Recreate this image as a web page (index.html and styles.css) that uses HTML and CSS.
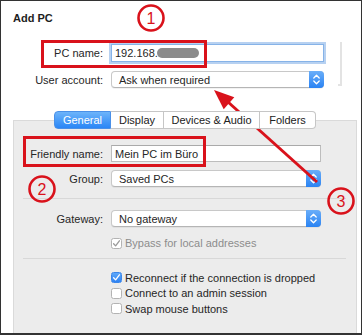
FILE: index.html
```html
<!DOCTYPE html>
<html>
<head>
<meta charset="utf-8">
<link rel="stylesheet" href="styles.css">
</head>
<body>
<div class="frame">
  <div class="title">Add PC</div>
  <div class="top">
    <div class="row">
      <span class="lbl">PC name:</span>
      <div class="input focus wide"><span>192.168.</span><span class="blur"></span></div>
    </div>
    <div class="row">
      <span class="lbl">User account:</span>
      <div class="select wide"><span>Ask when required</span>
        <svg class="stepper" viewBox="0 0 15 17" width="15" height="17"><polyline points="4.8,7 7.5,4.3 10.2,7"/><polyline points="4.8,10 7.5,12.7 10.2,10"/></svg>
      </div>
    </div>
  </div>
  <div class="tabs">
    <div class="tab t-general active">General</div>
    <div class="tab t-display">Display</div>
    <div class="tab t-devices">Devices &amp; Audio</div>
    <div class="tab t-folders">Folders</div>
  </div>
  <div class="panel">
    <div class="row">
      <span class="lbl">Friendly name:</span>
      <div class="input narrow"><span>Mein PC im Büro</span></div>
    </div>
    <div class="row gap8">
      <span class="lbl">Group:</span>
      <div class="select narrow"><span>Saved PCs</span>
        <svg class="stepper" viewBox="0 0 15 17" width="15" height="17"><polyline points="4.8,7 7.5,4.3 10.2,7"/><polyline points="4.8,10 7.5,12.7 10.2,10"/></svg>
      </div>
    </div>
    <div class="sep sep1"></div>
    <div class="row gap11">
      <span class="lbl">Gateway:</span>
      <div class="select narrow"><span>No gateway</span>
        <svg class="stepper" viewBox="0 0 15 17" width="15" height="17"><polyline points="4.8,7 7.5,4.3 10.2,7"/><polyline points="4.8,10 7.5,12.7 10.2,10"/></svg>
      </div>
    </div>
    <div class="check bypass disabled">
      <span class="box"><svg viewBox="0 0 11 11" width="11" height="11"><polyline points="2.6,5.8 4.6,7.9 8.4,2.8"/></svg></span>
      <span>Bypass for local addresses</span>
    </div>
    <div class="sep sep2"></div>
    <div class="checks">
      <div class="check">
        <span class="box on"><svg viewBox="0 0 11 11" width="11" height="11"><polyline points="2.6,5.8 4.6,7.9 8.4,2.8"/></svg></span>
        <span>Reconnect if the connection is dropped</span>
      </div>
      <div class="check">
        <span class="box"></span>
        <span>Connect to an admin session</span>
      </div>
      <div class="check">
        <span class="box"></span>
        <span>Swap mouse buttons</span>
      </div>
    </div>
  </div>
  <div class="ghost"></div>
  <svg class="annot" viewBox="0 0 362 335" width="362" height="335">
    <rect x="42.5" y="41.5" width="163" height="25" class="redbox"/>
    <rect x="24.5" y="137.5" width="180" height="28" class="redbox"/>
    <circle cx="151" cy="18" r="12.5" class="ring"/>
    <text x="151" y="24" class="num">1</text>
    <circle cx="42" cy="189" r="12.5" class="ring"/>
    <text x="42" y="195" class="num">2</text>
    <circle cx="341" cy="201" r="12.5" class="ring"/>
    <text x="341" y="207" class="num">3</text>
    <line x1="317" y1="182" x2="228" y2="102" class="arrow"/>
    <polygon points="214,90 234.3,97.2 223.7,109.2" class="head"/>
  </svg>
</div>
</body>
</html>
```
FILE: styles.css
```css
body {
  margin: 0;
}

.frame {
  width: 362px;
  height: 335px;
  box-sizing: border-box;
  border: 1px solid #333;
  border-bottom-width: 2px;
  background: #fff;
  position: relative;
  display: flex;
  flex-direction: column;
  font-family: "Liberation Sans", Arial, sans-serif;
  font-size: 11px;
  color: #262626;
  overflow: hidden;
}

.title {
  font-weight: bold;
  line-height: 14px;
  height: 14px;
  padding: 10px 0 0 12px;
  color: #1e1e1e;
}

.top {
  margin-top: 19px;
  display: flex;
  flex-direction: column;
  gap: 9px;
}

.row {
  display: flex;
  align-items: center;
}

.lbl {
  flex: none;
  width: 102px;
  margin-right: 8px;
  text-align: right;
  white-space: nowrap;
}

.panel .lbl {
  width: 89px;
}

.input {
  box-sizing: border-box;
  height: 17px;
  border: 1px solid #bdbdbd;
  border-top-color: #aaa;
  background: #fff;
  padding-left: 3px;
  display: flex;
  align-items: center;
  white-space: nowrap;
}

.input.focus {
  height: 18px;
  border-color: #86b3e8;
  box-shadow: 0 0 0 2px #b7d1f1;
}

.wide {
  width: 213px;
}

.narrow {
  width: 210px;
}

.blur {
  display: inline-block;
  width: 42px;
  height: 10px;
  margin-left: -1px;
  border-radius: 5px;
  background: #8b8b8b;
  filter: blur(0.7px);
}

.select {
  box-sizing: border-box;
  height: 17px;
  border: 1px solid #c8c8c8;
  border-bottom-color: #b5b5b5;
  border-radius: 4px;
  background: #fff;
  padding-left: 7px;
  display: flex;
  align-items: center;
  white-space: nowrap;
  box-shadow: 0 1px 0 rgba(0, 0, 0, 0.05);
}

.stepper {
  flex: none;
  margin: -1px -1px -1px auto;
  border-radius: 0 4px 4px 0;
  background: linear-gradient(#6aaef9, #2a83f3);
}

.stepper polyline {
  fill: none;
  stroke: #fff;
  stroke-width: 1.3;
  stroke-linecap: round;
  stroke-linejoin: round;
}

.tabs {
  margin-top: 23px;
  margin-left: 53px;
  margin-bottom: -9px;
  display: flex;
  height: 18px;
  position: relative;
  z-index: 1;
}

.tab {
  box-sizing: border-box;
  height: 18px;
  border: 1px solid #c6c6c6;
  border-left: none;
  background: #fff;
  display: flex;
  align-items: center;
  justify-content: center;
  white-space: nowrap;
  color: #222;
}

.tab.active {
  background: linear-gradient(#6db4fa, #2a86f6);
  border-color: #4a90e8;
  color: #fff;
}

.t-general {
  width: 57px;
  border-left: 1px solid #4a90e8;
  border-radius: 4px 0 0 4px;
}

.t-display {
  width: 53px;
}

.t-devices {
  width: 96px;
}

.t-folders {
  width: 56px;
  border-radius: 0 4px 4px 0;
}

.panel {
  flex: 1;
  margin: 0 4px 0 12px;
  background: #ececec;
  border: 1px solid #dadada;
  border-bottom: none;
  padding-top: 24px;
  display: flex;
  flex-direction: column;
}

.gap8 {
  margin-top: 8px;
}

.gap11 {
  margin-top: 11px;
}

.sep {
  height: 1px;
  background: #d8d8d8;
  margin-left: 9px;
  margin-right: 10px;
}

.sep1 {
  margin-top: 11px;
}

.sep2 {
  margin-top: 8px;
}

.check {
  display: flex;
  align-items: center;
  height: 15.5px;
  padding-left: 97px;
  white-space: nowrap;
}

.bypass {
  margin-top: 9px;
  height: 14px;
}

.disabled {
  color: #8c8c8c;
}

.checks {
  margin-top: 11px;
}

.box {
  flex: none;
  box-sizing: border-box;
  width: 11px;
  height: 11px;
  margin-right: 3px;
  border: 1px solid #b3b3b3;
  border-radius: 2.5px;
  background: #fff;
  position: relative;
}

.box svg {
  position: absolute;
  left: -1px;
  top: -1px;
}

.box polyline {
  fill: none;
  stroke: #9a9a9a;
  stroke-width: 1.3;
  stroke-linecap: round;
  stroke-linejoin: round;
}

.box.on {
  background: linear-gradient(#5ea8f9, #2e82f3);
  border-color: #3a86ea;
}

.box.on polyline {
  stroke: #fff;
}

.ghost {
  position: absolute;
  left: 337px;
  top: 41px;
  width: 2px;
  height: 42px;
  border-right: 2px solid #e3e3e3;
  border-bottom: 2px solid #e3e3e3;
}

.annot {
  position: absolute;
  left: -1px;
  top: -1px;
  pointer-events: none;
}

.redbox {
  fill: none;
  stroke: #d9121b;
  stroke-width: 3;
}

.ring {
  fill: none;
  stroke: #d9121b;
  stroke-width: 2.6;
}

.num {
  fill: #d9121b;
  font-family: "Liberation Sans", Arial, sans-serif;
  font-size: 16px;
  text-anchor: middle;
}

.arrow {
  stroke: #d9121b;
  stroke-width: 3;
}

.head {
  fill: #d9121b;
}
```
